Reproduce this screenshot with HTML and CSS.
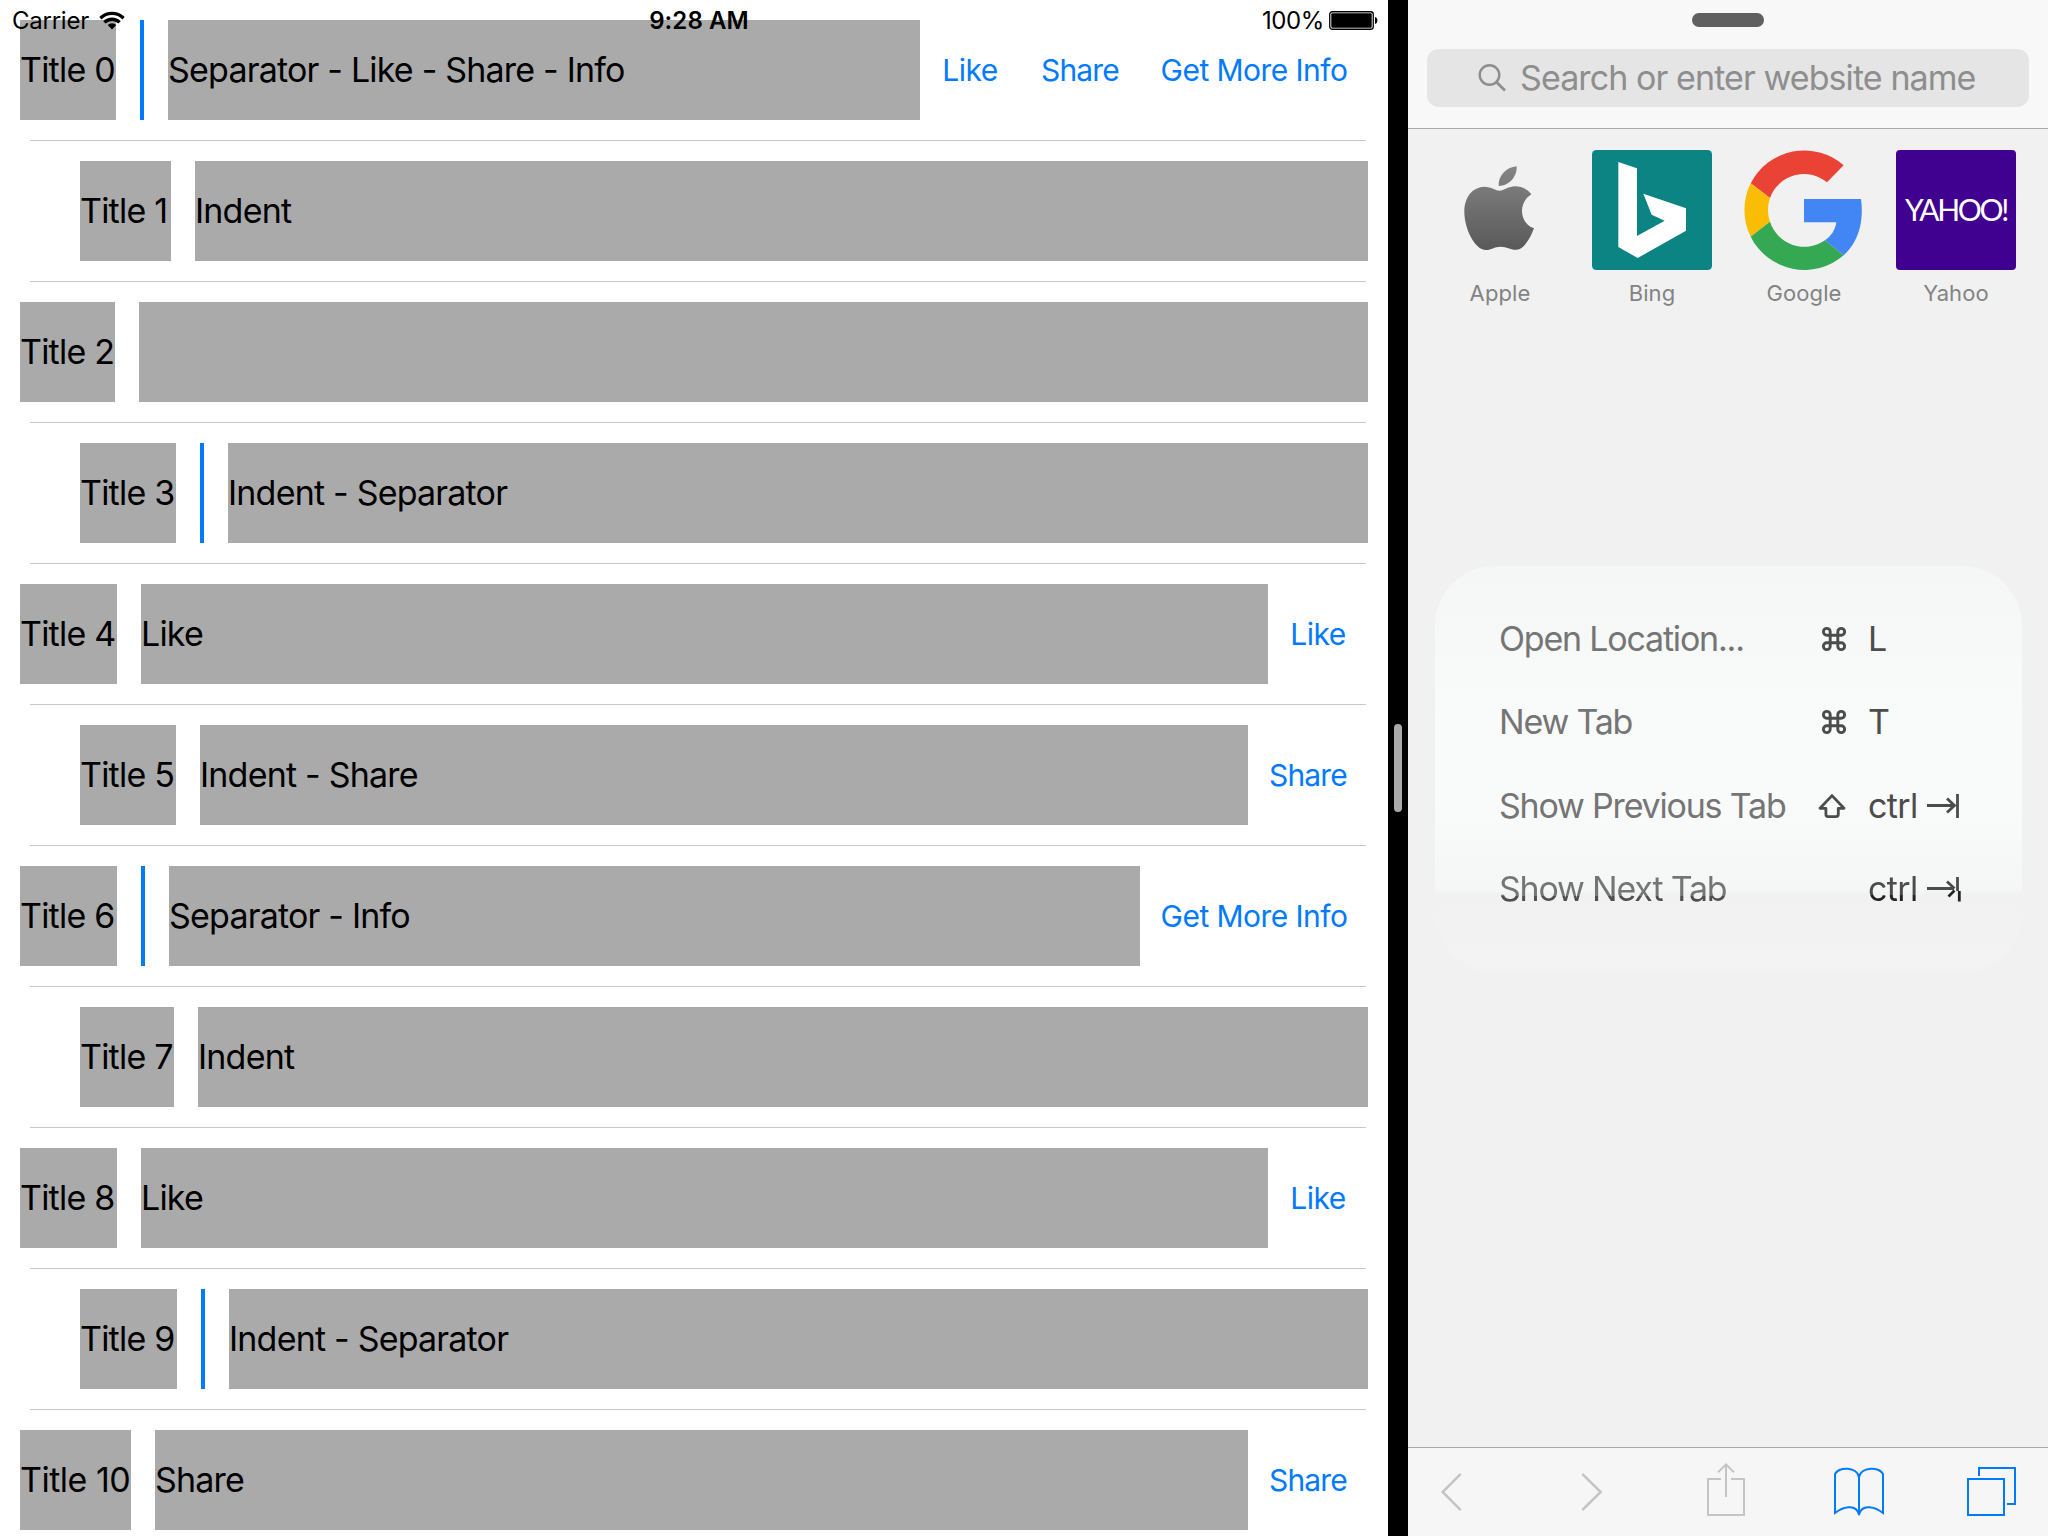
FILE: index.html
```
<!DOCTYPE html>
<html lang="en">
<head>
<meta charset="utf-8">
<title>Split view</title>
<link rel="stylesheet" href="styles.css">
</head>
<body>
<div class="screen">
  <main class="list-pane">
    <div class="status">
      <span class="status-side">
        <span class="carrier">Carrier</span>
        <svg class="wifi" viewBox="0 0 26 19" width="26" height="19"><g fill="none" stroke="#000" stroke-width="3.3"><path d="M1.4 7.2a16.6 16.6 0 0 1 23.2 0"/><path d="M5.4 11.4a10.8 10.8 0 0 1 15.2 0"/></g><path d="M13 18.5l-4.3-4.4a6.2 6.2 0 0 1 8.6 0z"/></svg>
      </span>
      <span class="time">9:28 AM</span>
      <span class="status-side status-right">
        <span class="percent">100%</span>
        <svg class="battery" viewBox="0 0 49 19" width="49" height="19"><rect x=".75" y=".75" width="43.5" height="17.5" rx="2.5" fill="#fff" stroke="#000" stroke-width="1.3"/><rect x="2.3" y="2.3" width="40.4" height="14.4" rx="1"/><path d="M46 6c1.700.6 2.400 1.800 2.400 3.500s-.7 2.900-2.400 3.500z"/></svg>
      </span>
    </div>
    <div class="row"><div class="title" style="width:96px">Title 0</div><i class="bar"></i><div class="detail">Separator - Like - Share - Info</div><div class="actions"><a class="like">Like</a><a class="share">Share</a><a class="info">Get More Info</a></div></div>
    <div class="row indent"><div class="title" style="width:91px">Title 1</div><div class="detail">Indent</div></div>
    <div class="row"><div class="title" style="width:95px">Title 2</div><div class="detail"></div></div>
    <div class="row indent"><div class="title" style="width:96px">Title 3</div><i class="bar"></i><div class="detail">Indent - Separator</div></div>
    <div class="row"><div class="title" style="width:97px">Title 4</div><div class="detail">Like</div><div class="actions"><a class="like">Like</a></div></div>
    <div class="row indent"><div class="title" style="width:96px">Title 5</div><div class="detail">Indent - Share</div><div class="actions"><a class="share">Share</a></div></div>
    <div class="row"><div class="title" style="width:97px">Title 6</div><i class="bar"></i><div class="detail">Separator - Info</div><div class="actions"><a class="info">Get More Info</a></div></div>
    <div class="row indent"><div class="title" style="width:94px">Title 7</div><div class="detail">Indent</div></div>
    <div class="row"><div class="title" style="width:97px">Title 8</div><div class="detail">Like</div><div class="actions"><a class="like">Like</a></div></div>
    <div class="row indent"><div class="title" style="width:97px">Title 9</div><i class="bar"></i><div class="detail">Indent - Separator</div></div>
    <div class="row"><div class="title ten" style="width:111px">Title 10</div><div class="detail">Share</div><div class="actions"><a class="share">Share</a></div></div>
  </main>
  <div class="divider"><i class="grip"></i></div>
  <aside class="browser">
    <header class="top">
      <i class="pill"></i>
      <div class="search">
        <svg width="28" height="28" viewBox="0 0 28 28" fill="none" stroke="#8e8e8e" stroke-width="2.400"><circle cx="11.500" cy="11" r="9.800"/><path d="M18.600 18.200l8.400 8.400" stroke-width="2.800"/></svg>
        <span>Search or enter website name</span>
      </div>
    </header>
    <nav class="favorites">
      <div class="fav">
        <svg class="tile" viewBox="30 60 360 360"><defs><linearGradient id="g" gradientUnits="userSpaceOnUse" x1="0" y1="109" x2="0" y2="360"><stop offset="0" stop-color="#858585"/><stop offset="1" stop-color="#595959"/></linearGradient></defs><g fill="url(#g)"><path d="M206 168C204 138 228 112 260 109C262 139 238 168 206 168Z"/><path d="M209 182C198 182 183 170 164 170C128 171 103 200 103 246C103 295 134 360 168 360C185 360 192 350 212 350C232 350 240 360 260 359C282 358 301 324 312 295C290 288 276 267 276 243C276 222 287 204 304 193C293 177 274 169 256 169C236 169 220 182 209 182Z"/></g></svg>
        <span>Apple</span>
      </div>
      <div class="fav">
        <svg class="tile" viewBox="486 60 360 360"><rect x="486" y="60" width="360" height="360" rx="13" fill="#0c8484"/><path fill="#fff" d="M565 96L621 115V318L704 272L665 254L640 191L768 235V302L623 384L565 351Z"/></svg>
        <span>Bing</span>
      </div>
      <div class="fav">
        <svg class="tile" viewBox="942 60 360 360"><path fill="#ea4335" d="M962 160A180 180 0 0 1 1241 106L1191 157A108 108 0 0 0 1020 204Z"/><path fill="#fbbc05" d="M962 160A180 180 0 0 0 962 320L1020 275A108 108 0 0 1 1020 204Z"/><path fill="#34a853" d="M962 320A180 180 0 0 0 1241 376L1185 331A108 108 0 0 1 1020 275Z"/><path fill="#4285f4" d="M1122 207H1293C1302 275 1286 335 1241 376L1185 331C1204 318 1216 299 1219 277H1122Z"/></svg>
        <span>Google</span>
      </div>
      <div class="fav">
        <div class="tile yahoo">YAHOO!</div>
        <span>Yahoo</span>
      </div>
    </nav>
    <div class="page">
      <div class="shortcuts">
        <div class="cmd"><span class="name">Open Location...</span><svg class="mod" viewBox="0 0 28 28"><use href="#cmd"/></svg><span class="key">L</span></div>
        <div class="cmd"><span class="name">New Tab</span><svg class="mod" viewBox="0 0 28 28"><use href="#cmd"/></svg><span class="key">T</span></div>
        <div class="cmd"><span class="name">Show Previous Tab</span><svg class="mod" viewBox="0 0 28 28"><path d="M14 3.600L2 16.300h5.900v5.900q0 2.400 2.400 2.400h7.600q2.400 0 2.400-2.400v-5.900H26z" fill="none" stroke="#4c4c4c" stroke-width="2.800" stroke-linejoin="round"/></svg><span class="key">ctrl<svg class="tab" viewBox="0 0 34 28"><path d="M0 13.500h27M20 6.500l7.500 7-7.500 7M30.500 2v24"/></svg></span></div>
        <div class="cmd last"><span class="name">Show Next Tab</span><span class="mod"></span><span class="key"><b>ctrl</b><svg class="tab" viewBox="0 0 34 28"><path d="M0 13.500h27M20 6.500l7.500 7M30.500 2v14"/><path class="dark" d="M21.500 21.500l6-6M32.300 16v10.500"/></svg></span></div>
      </div>
      <svg class="defs" width="0" height="0"><symbol id="cmd" viewBox="0 0 28 28"><path d="M12.200 10.200V6.800A3.400 3.400 0 1 0 8.800 10.200H23.200A3.400 3.400 0 1 0 19.800 6.800V21.200A3.400 3.400 0 1 0 23.200 17.800H8.800A3.400 3.400 0 1 0 12.200 21.200Z" fill="none" stroke="#4c4c4c" stroke-width="2.900"/></symbol></svg>
    </div>
    <footer class="toolbar">
      <svg class="chevron" width="24" height="88" viewBox="30 24 72 264"><path d="M90 104L38 156L90 208"/></svg>
      <svg class="chevron" width="24" height="88" viewBox="450 24 72 264"><path d="M459 104L512 156L459 208"/></svg>
      <svg width="40" height="88" viewBox="828 24 120 264"><path d="M873 117H834V225H942V117H903M888 171V73M864 97L888 73L912 97"/></svg>
      <svg class="blue" width="54" height="88" viewBox="96 24 162 264"><path d="M177 226V112C172 78 112 80 105 103V219C125 203 168 187 177 224C186 187 229 203 249 219V103C242 80 182 78 177 112"/></svg>
      <svg class="blue" width="52" height="88" viewBox="495 24 156 264"><path d="M504 117H612V225H504ZM537 108V84H645V192H621"/></svg>
    </footer>
  </aside>
</div>
</body>
</html>
```
FILE: styles.css
```
* { box-sizing: border-box; }
body { margin: 0; font-family: Inter, "Liberation Sans", sans-serif; color: #000; }
.screen { display: flex; width: 2048px; height: 1536px; overflow: hidden; background: #fff; }

/* Left app: list of rows */
.list-pane { position: relative; width: 1388px; flex: none; }
.row { display: flex; height: 141px; padding: 20px 20px 21px; background: linear-gradient(#c8c7cc, #c8c7cc) 30px 140px / 1336px 1px no-repeat; }
.row.indent { padding-left: 80px; }
.row:last-child { background: none; }
.title, .detail { height: 100px; line-height: 99px; font-size: 34px; white-space: nowrap; background: #aaa; }
.title { flex: none; margin-right: 24px; letter-spacing: -0.78px; }
.title.ten { letter-spacing: -0.5px; }
.detail { flex: 1; letter-spacing: -0.8px; }
.bar { width: 4px; height: 100px; flex: none; margin-right: 24px; background: #007aff; }
.actions { display: flex; }
.actions a { line-height: 101px; font-size: 30px; letter-spacing: -0.55px; text-align: center; color: #007aff; }
.like { width: 100px; }
.actions .share { width: 120px; letter-spacing: -0.8px; }
.info { width: 228px; }

.status { position: absolute; top: 0; left: 0; width: 100%; height: 40px; padding: 0 10px 0 12px; display: flex; align-items: center; justify-content: space-between; font-size: 24px; line-height: 41px; }
.status-side { width: 300px; display: flex; align-items: center; }
.status-right { justify-content: flex-end; }
.carrier { letter-spacing: -0.25px; margin-right: 10px; }
.time { padding-left: 8px; font-weight: 600; letter-spacing: 0.1px; }
.percent { letter-spacing: -0.4px; margin-right: 5px; }

.divider { width: 20px; flex: none; background: #000; display: flex; align-items: center; justify-content: center; }
.grip { width: 8px; height: 88px; border-radius: 4px; background: #aaa; }

/* Right app: browser */
.browser { width: 640px; display: flex; flex-direction: column; background: #f1f1f1; }
.top { height: 129px; flex: none; padding: 13px 19px 0; background: #f8f8f8; border-bottom: 1px solid #a9a9a9; display: flex; flex-direction: column; align-items: center; }
.pill { width: 72px; height: 14px; border-radius: 7px; background: #606060; }
.search { width: 602px; height: 58px; margin-top: 22px; padding-left: 51px; border-radius: 12px; background: #e5e5e5; display: flex; align-items: center; gap: 14px; font-size: 34px; letter-spacing: -0.91px; color: #8e8e8e; white-space: nowrap; }
.search span { padding-bottom: 2px; }
.favorites { display: flex; gap: 32px; padding: 21px 32px 0; }
.fav { width: 120px; display: flex; flex-direction: column; align-items: center; font-size: 22px; line-height: 30px; color: #838383; letter-spacing: 0.1px; }
.tile { width: 120px; height: 120px; display: block; margin-bottom: 8px; }
.yahoo { border-radius: 4px; background: #400090; color: #fff; font: 400 30px/119px Lato, sans-serif; letter-spacing: -2.3px; text-align: center; }
.page { flex: 1; padding: 258px 26px 0 27px; }
.shortcuts { height: 406px; padding: 31px 36px 0 64px; border-radius: 60px; background: linear-gradient(#f5f7f6 0, #f9fafa 150px, #f9fafa 240px, #f5f6f6 324px, #f1f1f1 328px, #f3f3f3 100%); }
.cmd { display: grid; grid-template-columns: 319px 28px 1fr; align-items: center; height: 83.5px; font-size: 34px; line-height: 42px; color: #4c4c4c; white-space: nowrap; }
.name { letter-spacing: -1.2px; color: #757575; }
.mod { width: 28px; height: 28px; }
.key { padding-left: 22px; display: flex; align-items: center; letter-spacing: -0.6px; }
.key b { font-weight: 400; }
.tab { width: 34px; height: 28px; margin-left: 9px; fill: none; stroke: #4c4c4c; stroke-width: 2.8; }
.tab .dark { stroke: #222; }
.last .name, .last b { background: linear-gradient(#757575 28px, #4f4f4f 28px); -webkit-background-clip: text; background-clip: text; color: transparent; }
.last b { background-image: linear-gradient(#4c4c4c 27px, #222 27px); }
.defs { display: block; }
.toolbar { height: 89px; flex: none; padding-left: 32px; display: grid; grid-template-columns: 140px 126px 126px 133px 52px; background: #f6f6f6; border-top: 1px solid #a9a9a9; }
.toolbar svg { fill: none; stroke: #c4c4c4; stroke-width: 6; }
.toolbar .chevron { stroke-width: 7.5; stroke-linecap: round; }
.toolbar .blue { stroke: #007aff; }
```
